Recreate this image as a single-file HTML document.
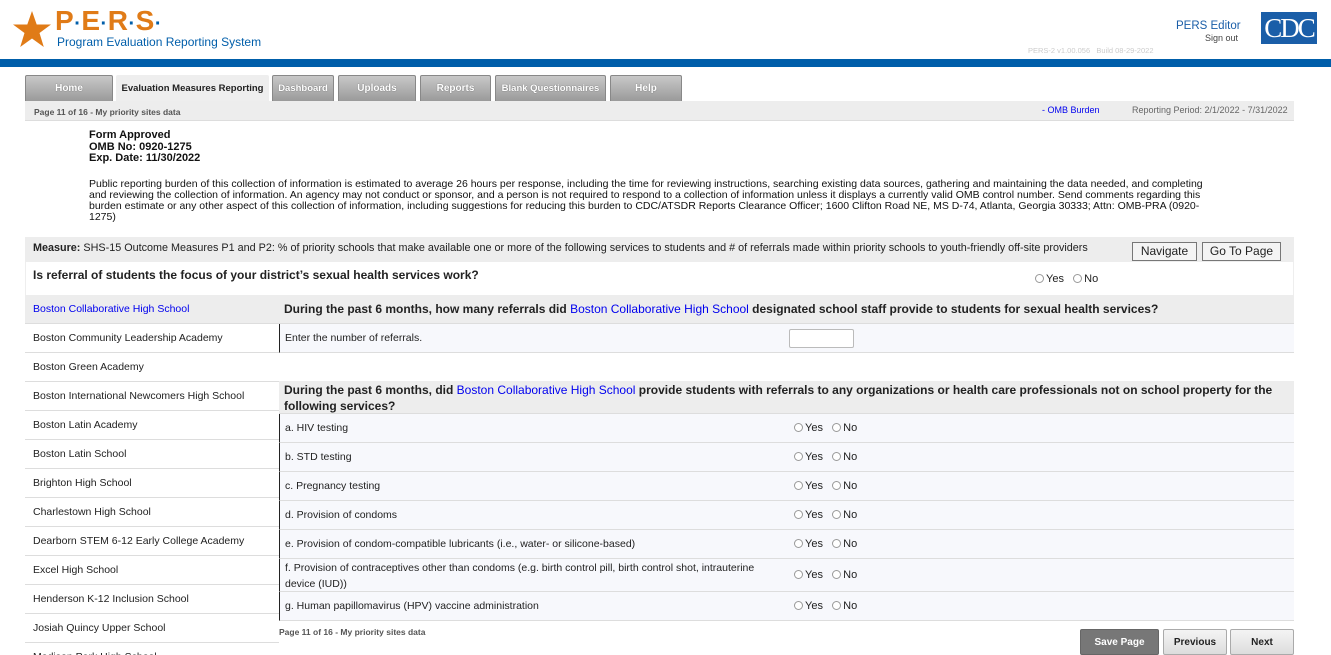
<!DOCTYPE html>
<html><head><meta charset="utf-8"><style>
*{margin:0;padding:0;box-sizing:border-box}
html,body{width:1331px;height:655px;overflow:hidden}
body{background:#fff;font-family:"Liberation Sans",Arial,sans-serif;font-size:11px;color:#222;position:relative}
.a{position:absolute}
.tab{position:absolute;top:75px;height:26px;background:linear-gradient(#c8c8c8,#9a9a9a);border:1px solid #888;border-bottom:none;border-radius:2px 2px 0 0;color:#fff;font-weight:bold;font-size:10px;text-align:center;line-height:26px;text-shadow:0 0 1px #555}
.li{position:absolute;left:25px;width:254px;height:29px;border-bottom:1px solid #ddd;line-height:28px;padding-left:8px;font-size:10.5px;color:#222}
.row{position:absolute;left:279px;width:1015px;background:#f7f8fc;border-left:1px solid #222;border-bottom:1px solid #ddd;font-size:10.5px;padding-left:5px}
.rd{position:absolute;left:514px;font-size:11px}
.c{display:inline-block;width:9px;height:9px;border:1px solid #999;border-radius:50%;margin-right:2px;vertical-align:-1px;background:#fff}
.btn{position:absolute;top:629px;height:26px;font-weight:bold;font-size:10px;text-align:center;line-height:26px;border:1px solid #aaa;border-radius:2px}
.h{font-size:12px;font-weight:bold;color:#222}
</style></head><body>
<svg class="a" style="left:12px;top:11px" width="40" height="37" viewBox="0 0 40 37"><polygon points="20,0 24.7,13.5 39,13.5 27.5,22 31.8,36 20,27.5 8.2,36 12.5,22 1,13.5 15.3,13.5" fill="#e07b17"/></svg>
<div class="a" style="left:55px;top:7px;font-size:28px;line-height:28px;font-weight:bold;color:#e07b17;letter-spacing:0.5px">P<span style="color:#005eaa;font-size:20px">·</span>E<span style="color:#005eaa;font-size:20px">·</span>R<span style="color:#005eaa;font-size:20px">·</span>S<span style="color:#005eaa;font-size:20px">·</span></div>
<div class="a" style="left:57px;top:35px;font-size:12px;color:#005eaa">Program Evaluation Reporting System</div>
<div class="a" style="left:1176px;top:20px;font-size:11.5px;color:#1a5ea8">PERS Editor</div>
<div class="a" style="left:1205px;top:33px;font-size:9px;color:#444">Sign out</div>
<div class="a" style="left:1261px;top:12px;width:56px;height:32px;background:#1a5ea8;color:#fff;font-family:'Liberation Serif',serif;font-size:27px;line-height:32px;text-align:center;letter-spacing:-2px">CDC</div>
<div class="a" style="left:1028px;top:46px;font-size:7.5px;color:#ccc">PERS-2 v1.00.056 &nbsp; Build 08-29-2022</div>
<div class="a" style="left:0;top:59px;width:1331px;height:8px;background:#005eaa"></div>

<div class="tab" style="left:25px;width:88px">Home</div>
<div class="tab" style="left:116px;width:153px;background:#eee;color:#222;text-shadow:none;border-color:#eee;font-size:9.5px">Evaluation Measures Reporting</div>
<div class="tab" style="left:272px;width:62px;font-size:9.5px">Dashboard</div>
<div class="tab" style="left:338px;width:78px">Uploads</div>
<div class="tab" style="left:420px;width:71px">Reports</div>
<div class="tab" style="left:495px;width:111px;font-size:9.5px">Blank Questionnaires</div>
<div class="tab" style="left:610px;width:72px">Help</div>
<div class="a" style="left:25px;top:101px;width:1269px;height:20px;background:#ededed;border-bottom:1px solid #ddd"></div>
<div class="a" style="left:34px;top:107px;font-size:8.5px;color:#555;font-weight:bold">Page 11 of 16 - My priority sites data</div>
<div class="a" style="left:1042px;top:105px;font-size:9px;color:#0000ee">- OMB Burden</div>
<div class="a" style="left:1132px;top:105px;font-size:9px;color:#666">Reporting Period: 2/1/2022 - 7/31/2022</div>

<div class="a" style="left:89px;top:130px;font-size:11px;line-height:11.5px;font-weight:bold;color:#111">Form Approved<br>OMB No: 0920-1275<br>Exp. Date: 11/30/2022</div>
<div class="a" style="left:89px;top:179px;width:1128px;font-size:10.5px;line-height:11px;color:#111">Public reporting burden of this collection of information is estimated to average 26 hours per response, including the time for reviewing instructions, searching existing data sources, gathering and maintaining the data needed, and completing and reviewing the collection of information. An agency may not conduct or sponsor, and a person is not required to respond to a collection of information unless it displays a currently valid OMB control number. Send comments regarding this<br>burden estimate or any other aspect of this collection of information, including suggestions for reducing this burden to CDC/ATSDR Reports Clearance Officer; 1600 Clifton Road NE, MS D-74, Atlanta, Georgia 30333; Attn: OMB-PRA (0920-<br>1275)</div>

<div class="a" style="left:25px;top:237px;width:1269px;height:25px;background:#ededed"></div>
<div class="a" style="left:33px;top:242px;font-size:10.8px;color:#222"><b>Measure:</b> SHS-15 Outcome Measures P1 and P2: % of priority schools that make available one or more of the following services to students and # of referrals made within priority schools to youth-friendly off-site providers</div>
<div class="a" style="left:1132px;top:242px;width:65px;height:19px;border:1px solid #777;background:#f4f4f4;font-size:12px;text-align:center;line-height:17px">Navigate</div>
<div class="a" style="left:1202px;top:242px;width:79px;height:19px;border:1px solid #777;background:#f4f4f4;font-size:12px;text-align:center;line-height:17px">Go To Page</div>
<div class="a" style="left:25px;top:262px;width:1269px;height:33px;border-left:1px solid #eee;border-right:1px solid #eee"></div>
<div class="a h" style="left:33px;top:268px">Is referral of students the focus of your district’s sexual health services work?</div>
<div class="a" style="left:1035px;top:273px;font-size:11px"><span class="c"></span>Yes &nbsp; <span class="c"></span>No</div>

<div class="li" style="top:295px;background:#ededed;color:#0000ee">Boston Collaborative High School</div>
<div class="li" style="top:324px">Boston Community Leadership Academy</div>
<div class="li" style="top:353px">Boston Green Academy</div>
<div class="li" style="top:382px">Boston International Newcomers High School</div>
<div class="li" style="top:411px">Boston Latin Academy</div>
<div class="li" style="top:440px">Boston Latin School</div>
<div class="li" style="top:469px">Brighton High School</div>
<div class="li" style="top:498px">Charlestown High School</div>
<div class="li" style="top:527px">Dearborn STEM 6-12 Early College Academy</div>
<div class="li" style="top:556px">Excel High School</div>
<div class="li" style="top:585px">Henderson K-12 Inclusion School</div>
<div class="li" style="top:614px">Josiah Quincy Upper School</div>
<div class="li" style="top:643px">Madison Park High School</div>

<div class="a h" style="left:279px;top:295px;width:1015px;height:29px;background:#ededed;border-bottom:1px solid #ddd;padding-left:5px;line-height:28px">During the past 6 months, how many referrals did <span style="color:#0000ee;font-weight:normal">Boston Collaborative High School</span> designated school staff provide to students for sexual health services?</div>
<div class="row" style="top:324px;height:29px;line-height:28px">Enter the number of referrals.</div>
<div class="a" style="left:789px;top:329px;width:65px;height:19px;border:1px solid #bbb;background:#fff;border-radius:2px"></div>
<div class="a h" style="left:279px;top:381px;width:1015px;height:33px;background:#ededed;border-bottom:1px solid #ddd;padding:1px 5px;line-height:16px">During the past 6 months, did <span style="color:#0000ee;font-weight:normal">Boston Collaborative High School</span> provide students with referrals to any organizations or health care professionals not on school property for the<br>following services?</div>

<div class="row" style="top:414px;height:29px;line-height:28px">a. HIV testing<span class="rd" style="top:0"><span class="c"></span>Yes &nbsp; <span class="c"></span>No</span></div>
<div class="row" style="top:443px;height:29px;line-height:28px">b. STD testing<span class="rd" style="top:0"><span class="c"></span>Yes &nbsp; <span class="c"></span>No</span></div>
<div class="row" style="top:472px;height:29px;line-height:28px">c. Pregnancy testing<span class="rd" style="top:0"><span class="c"></span>Yes &nbsp; <span class="c"></span>No</span></div>
<div class="row" style="top:501px;height:29px;line-height:28px">d. Provision of condoms<span class="rd" style="top:0"><span class="c"></span>Yes &nbsp; <span class="c"></span>No</span></div>
<div class="row" style="top:530px;height:29px;line-height:28px">e. Provision of condom-compatible lubricants (i.e., water- or silicone-based)<span class="rd" style="top:0"><span class="c"></span>Yes &nbsp; <span class="c"></span>No</span></div>
<div class="row" style="top:559px;height:33px;line-height:16px;padding-top:1px"><div style="width:480px">f. Provision of contraceptives other than condoms (e.g. birth control pill, birth control shot, intrauterine<br>device (IUD))</div><span class="rd" style="top:8px"><span class="c"></span>Yes &nbsp; <span class="c"></span>No</span></div>
<div class="row" style="top:592px;height:29px;line-height:28px">g. Human papillomavirus (HPV) vaccine administration<span class="rd" style="top:0"><span class="c"></span>Yes &nbsp; <span class="c"></span>No</span></div>

<div class="a" style="left:279px;top:627px;font-size:8.5px;color:#555;font-weight:bold">Page 11 of 16 - My priority sites data</div>
<div class="btn" style="left:1080px;width:79px;background:#777;color:#fff;border-color:#666">Save Page</div>
<div class="btn" style="left:1163px;width:64px;background:linear-gradient(#f4f4f4,#ddd);color:#222">Previous</div>
<div class="btn" style="left:1230px;width:64px;background:linear-gradient(#f4f4f4,#ddd);color:#222">Next</div>
</body></html>
